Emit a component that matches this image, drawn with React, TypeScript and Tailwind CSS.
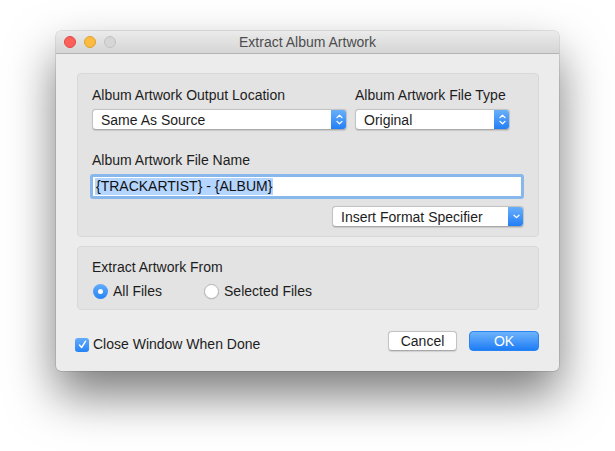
import { useState } from "react";

const font = { fontFamily: '"Liberation Sans", Arial, sans-serif' };

function UpDown() {
  return (
    <svg width="7" height="11" viewBox="0 0 7 11" fill="none" stroke="white" strokeWidth="1.3" strokeLinecap="round" strokeLinejoin="round">
      <path d="M1 3.6 3.5 1.2 6 3.6" />
      <path d="M1 7.4 3.5 9.8 6 7.4" />
    </svg>
  );
}

function Down() {
  return (
    <svg width="7" height="5" viewBox="0 0 7 5" fill="none" stroke="white" strokeWidth="1.3" strokeLinecap="round" strokeLinejoin="round">
      <path d="M1 1.2 3.5 3.6 6 1.2" />
    </svg>
  );
}

function Popup({ label, width, pull }: { label: string; width: string; pull?: boolean }) {
  return (
    <div className={`${width} h-[21px] flex rounded-[4px] bg-white border border-[#c3c3c3] border-b-[#a9a9a9] shadow-[0_0.5px_1px_rgba(0,0,0,0.12)] overflow-hidden`}>
      <div className="flex-1 pl-[8px] flex items-center text-[14px] text-[#1d1d1d] leading-none">{label}</div>
      <div className="w-[16px] -my-px -mr-px flex items-center justify-center bg-gradient-to-b from-[#6bb1fa] to-[#1a7cf5] rounded-r-[4px]">
        {pull ? <Down /> : <UpDown />}
      </div>
    </div>
  );
}

function Radio({ on, label }: { on: boolean; label: string }) {
  return (
    <label className="flex items-center gap-[5px] text-[14px] text-[#1d1d1d]">
      {on ? (
        <span className="w-[15px] h-[15px] rounded-full bg-gradient-to-b from-[#62acf9] to-[#2383f6] flex items-center justify-center">
          <span className="w-[5px] h-[5px] rounded-full bg-white" />
        </span>
      ) : (
        <span className="w-[15px] h-[15px] rounded-full bg-white border border-[#b4b4b4] shadow-[0_0.5px_1px_rgba(0,0,0,0.1)]" />
      )}
      {label}
    </label>
  );
}

export default function App() {
  const [from] = useState("all");

  return (
    <div className="w-[615px] h-[451px] bg-white pl-[56px] pt-[31px]" style={font}>
      <div className="w-[503px] h-[340px] rounded-[5px] bg-[#ececec] flex flex-col shadow-[0_24px_48px_rgba(0,0,0,0.52),0_0_0_0.5px_rgba(0,0,0,0.2)] overflow-hidden">
        {/* Title bar */}
        <div className="h-[23px] shrink-0 grid grid-cols-[1fr_auto_1fr] items-center bg-gradient-to-b from-[#ebebeb] to-[#d5d5d5] border-b border-[#b4b4b4]">
          <div className="flex items-center gap-[8px] pl-[8px]">
            <span className="w-[12px] h-[12px] rounded-full bg-[#fc605b] border border-[#de4a43]" />
            <span className="w-[12px] h-[12px] rounded-full bg-[#fdbc40] border border-[#dea033]" />
            <span className="w-[12px] h-[12px] rounded-full bg-[#d6d6d6] border border-[#c2c2c2]" />
          </div>
          <div className="text-[14px] text-[#4d4d4d] leading-none">Extract Album Artwork</div>
          <div />
        </div>

        {/* Body */}
        <div className="flex-1 flex flex-col pl-[21px] pr-[20px] pt-[19px]">
          {/* Box 1 */}
          <div className="h-[164px] rounded-[4px] bg-[#e3e3e3] border border-[#d8d8d8] px-[14px] pt-[13px]">
            <div className="flex gap-[8px]">
              <div className="flex flex-col gap-[6px]">
                <div className="text-[14px] text-[#1d1d1d] leading-[16px]">Album Artwork Output Location</div>
                <Popup label="Same As Source" width="w-[255px]" />
              </div>
              <div className="flex flex-col gap-[6px]">
                <div className="text-[14px] text-[#1d1d1d] leading-[16px]">Album Artwork File Type</div>
                <Popup label="Original" width="w-[155px]" />
              </div>
            </div>
            <div className="mt-[22px] text-[14px] text-[#1d1d1d] leading-[16px]">Album Artwork File Name</div>
            <div className="mt-[6px] -ml-[2px] w-[434px] h-[25px] rounded-[3px] border-[3px] border-[#88b7ec] bg-white flex items-center pl-[2px]">
              <span className="bg-[#b4d5fe] text-[14px] text-[#111] leading-[17px] px-[1px]">{"{TRACKARTIST} - {ALBUM}"}</span>
            </div>
            <div className="mt-[7px] flex justify-end">
              <Popup label="Insert Format Specifier" width="w-[192px]" pull />
            </div>
          </div>

          {/* Box 2 */}
          <div className="mt-[9px] h-[64px] rounded-[4px] bg-[#e3e3e3] border border-[#d8d8d8] px-[14px] pt-[12px]">
            <div className="text-[14px] text-[#1d1d1d] leading-[16px]">Extract Artwork From</div>
            <div className="mt-[6px] flex gap-[42px] ml-[1px]">
              <Radio on={from === "all"} label="All Files" />
              <Radio on={from === "selected"} label="Selected Files" />
            </div>
          </div>

          {/* Footer */}
          <div className="mt-[16px] flex items-center -ml-[2px]">
            <label className="flex items-center gap-[4px] text-[14px] text-[#1d1d1d] mt-[8px]">
              <span className="w-[14px] h-[14px] rounded-[3px] bg-gradient-to-b from-[#62acf9] to-[#2383f6] flex items-center justify-center">
                <svg width="9" height="9" viewBox="0 0 9 9" fill="none" stroke="white" strokeWidth="1.4" strokeLinecap="round" strokeLinejoin="round">
                  <path d="M1.5 5 3.6 7.5 7.6 1.2" />
                </svg>
              </span>
              Close Window When Done
            </label>
            <div className="flex-1" />
            <button className="w-[69px] h-[20px] rounded-[4px] bg-white border border-[#c3c3c3] border-b-[#a9a9a9] shadow-[0_0.5px_1px_rgba(0,0,0,0.12)] text-[14px] text-[#1d1d1d] leading-none">
              Cancel
            </button>
            <button className="ml-[12px] w-[70px] h-[20px] rounded-[4px] bg-gradient-to-b from-[#6cb3fa] to-[#1a7cf5] border border-[#2a83f2] text-[14px] text-white leading-none">
              OK
            </button>
          </div>
        </div>
      </div>
    </div>
  );
}
